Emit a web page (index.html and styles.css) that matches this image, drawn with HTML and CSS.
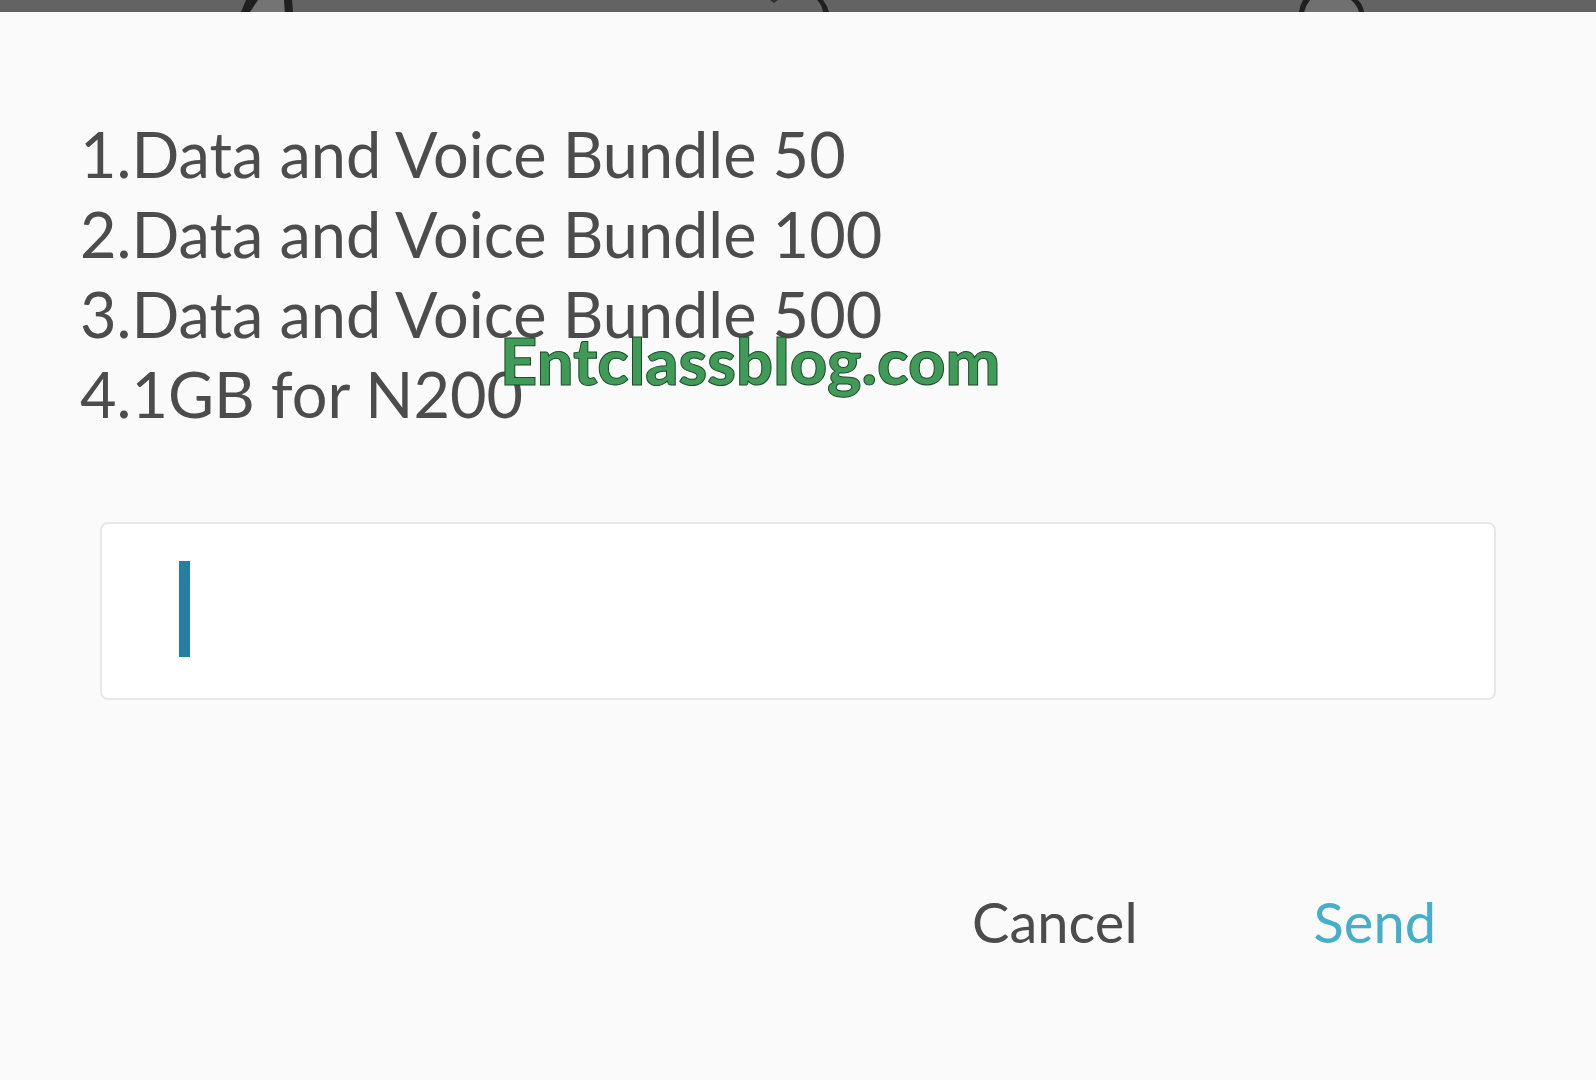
FILE: index.html
```
<!DOCTYPE html>
<html lang="en">
<head>
<meta charset="utf-8">
<meta name="viewport" content="width=device-width, initial-scale=1">
<title>Bundle menu</title>
<link rel="stylesheet" href="styles.css">
</head>
<body>
<svg class="backdrop" viewBox="0 0 1596 12" preserveAspectRatio="none" aria-hidden="true">
  <path d="M257 0H284V12H249Z" fill="#747474"/>
  <path d="M246 0H258L250 12H241Z M284 0H292L293 12H285Z" fill="#202020"/>
  <path d="M770 0H778L774 3Z" fill="#303030"/>
  <path d="M817 0H823Q827 5 829 12H823Q822 5 817 0Z" fill="#202020"/>
  <path d="M1308 0H1351Q1357 5 1359 12H1305Z" fill="#707070"/>
  <path d="M1303 0H1310Q1306 5 1304 12H1299Q1300 5 1303 0Z M1351 0H1358Q1363 5 1364 12H1359Q1357 5 1351 0Z" fill="#202020"/>
</svg>
<main class="dialog">
  <form class="form">
    <div class="message">
      <label class="options" for="reply">1.Data and Voice Bundle 50<br>2.Data and Voice Bundle 100<br>3.Data and Voice Bundle 500<br>4.1GB for N200</label>
      <span class="watermark">Entclassblog.com</span>
    </div>
    <div class="field">
      <input class="reply" id="reply" type="text" autocomplete="off">
      <span class="cursor"></span>
    </div>
    <div class="actions">
      <button class="button" type="button">Cancel</button>
      <button class="button send" type="submit">Send</button>
    </div>
  </form>
</main>
</body>
</html>
```

FILE: styles.css
```
* {
  box-sizing: border-box;
}

body {
  margin: 0;
  min-height: 100vh;
  background: #fafafa;
  color: #4c4c4c;
  font-family: Lato, sans-serif;
}

.backdrop {
  display: block;
  width: 100%;
  height: 12px;
  background: #636363;
}

.dialog {
  padding: 102px 80px 80px;
}

.message {
  position: relative;
}

.options {
  display: block;
  font-size: 63px;
  line-height: 80px;
}

.watermark {
  position: absolute;
  top: 206px;
  left: 420px;
  color: #3f9b57;
  font-size: 65px;
  font-weight: 900;
  line-height: 80px;
  -webkit-text-stroke: 1px #1d4a2a;
}

.field {
  position: relative;
  margin: 88px 20px 0;
}

.reply {
  display: block;
  width: 100%;
  height: 178px;
  padding: 0 76px;
  border: 2px solid #e8e8e8;
  border-radius: 8px;
  outline: 0;
  background: #fff;
  color: inherit;
  font: inherit;
  font-size: 63px;
  caret-color: transparent;
}

.cursor {
  position: absolute;
  top: 39px;
  left: 79px;
  width: 11px;
  height: 96px;
  background: #257fa3;
  pointer-events: none;
}

.actions {
  display: flex;
  justify-content: flex-end;
  gap: 176px;
  margin-top: 182px;
  padding-right: 80px;
}

.button {
  padding: 0;
  border: 0;
  background: none;
  color: inherit;
  font: inherit;
  font-size: 56px;
  line-height: 80px;
}

.send {
  color: #45aeca;
}
```
